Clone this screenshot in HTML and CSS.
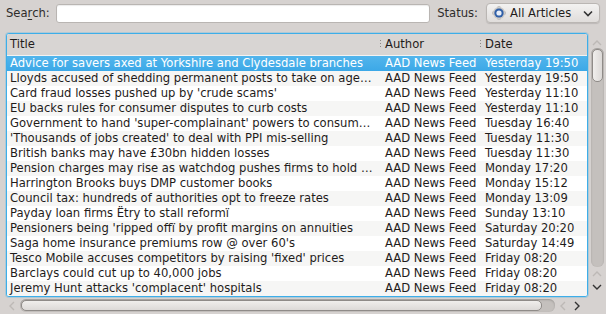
FILE: index.html
```html
<!DOCTYPE html>
<html>
<head>
<meta charset="utf-8">
<link rel="stylesheet" href="styles.css">
</head>
<body>
<div class="win">
  <div class="toolbar">
    <span class="lbl">Sea<u>r</u>ch:</span>
    <div class="search"></div>
    <span class="lbl status-lbl">Status:</span>
    <div class="combo">
      <svg class="gear" width="14" height="14" viewBox="0 0 14 14">
        <circle cx="7" cy="7" r="6" fill="#c9c7c5"/>
        <g fill="#d9d7d5" stroke="#aaa8a6" stroke-width="0.5">
          <rect x="6" y="0" width="2" height="3"/>
          <rect x="6" y="11" width="2" height="3"/>
          <rect x="0" y="6" width="3" height="2"/>
          <rect x="11" y="6" width="3" height="2"/>
        </g>
        <circle cx="7" cy="7" r="4.6" fill="#2f5fa8"/>
        <circle cx="7" cy="7" r="2.6" fill="#e8eef8"/>
      </svg>
      <span class="combo-text">All Articles</span>
      <svg class="chev" width="10" height="7" viewBox="0 0 10 7"><path d="M1 1.5 L5 5.5 L9 1.5" fill="none" stroke="#333" stroke-width="1.6"/></svg>
    </div>
  </div>
  <div class="main">
    <div class="list">
      <div class="head row">
        <div class="c title">Title</div>
        <div class="c author"><span class="grip"></span>Author</div>
        <div class="c date"><span class="grip"></span>Date</div>
      </div>
      <div class="body">
        <div class="row sel"><div class="c title">Advice for savers axed at Yorkshire and Clydesdale branches</div><div class="c author">AAD News Feed</div><div class="c date">Yesterday 19:50</div></div>
        <div class="row"><div class="c title">Lloyds accused of shedding permanent posts to take on age…</div><div class="c author">AAD News Feed</div><div class="c date">Yesterday 19:50</div></div>
        <div class="row"><div class="c title">Card fraud losses pushed up by 'crude scams'</div><div class="c author">AAD News Feed</div><div class="c date">Yesterday 11:10</div></div>
        <div class="row"><div class="c title">EU backs rules for consumer disputes to curb costs</div><div class="c author">AAD News Feed</div><div class="c date">Yesterday 11:10</div></div>
        <div class="row"><div class="c title">Government to hand 'super-complainant' powers to consum…</div><div class="c author">AAD News Feed</div><div class="c date">Tuesday 16:40</div></div>
        <div class="row"><div class="c title">'Thousands of jobs created' to deal with PPI mis-selling</div><div class="c author">AAD News Feed</div><div class="c date">Tuesday 11:30</div></div>
        <div class="row"><div class="c title">British banks may have £30bn hidden losses</div><div class="c author">AAD News Feed</div><div class="c date">Tuesday 11:30</div></div>
        <div class="row"><div class="c title">Pension charges may rise as watchdog pushes firms to hold …</div><div class="c author">AAD News Feed</div><div class="c date">Monday 17:20</div></div>
        <div class="row"><div class="c title">Harrington Brooks buys DMP customer books</div><div class="c author">AAD News Feed</div><div class="c date">Monday 15:12</div></div>
        <div class="row"><div class="c title">Council tax: hundreds of authorities opt to freeze rates</div><div class="c author">AAD News Feed</div><div class="c date">Monday 13:09</div></div>
        <div class="row"><div class="c title">Payday loan firms Ëtry to stall reformï</div><div class="c author">AAD News Feed</div><div class="c date">Sunday 13:10</div></div>
        <div class="row"><div class="c title">Pensioners being 'ripped offï by profit margins on annuities</div><div class="c author">AAD News Feed</div><div class="c date">Saturday 20:20</div></div>
        <div class="row"><div class="c title">Saga home insurance premiums row @ over 60's</div><div class="c author">AAD News Feed</div><div class="c date">Saturday 14:49</div></div>
        <div class="row"><div class="c title">Tesco Mobile accuses competitors by raising 'fixed' prices</div><div class="c author">AAD News Feed</div><div class="c date">Friday 08:20</div></div>
        <div class="row"><div class="c title">Barclays could cut up to 40,000 jobs</div><div class="c author">AAD News Feed</div><div class="c date">Friday 08:20</div></div>
        <div class="row"><div class="c title">Jeremy Hunt attacks 'complacent' hospitals</div><div class="c author">AAD News Feed</div><div class="c date">Friday 08:20</div></div>
      </div>
    </div>
    <div class="vscroll">
      <svg class="arr" width="12" height="8" viewBox="0 0 12 8"><path d="M2 6 L6 2 L10 6" fill="none" stroke="#bdb9b6" stroke-width="1.4"/></svg>
      <div class="vtrack"><div class="vthumb"></div></div>
      <svg class="arr arr-up2" width="12" height="8" viewBox="0 0 12 8"><path d="M2 6 L6 2 L10 6" fill="none" stroke="#bdb9b6" stroke-width="1.4"/></svg>
      <svg class="arr arr-dn" width="12" height="8" viewBox="0 0 12 8"><path d="M2 2 L6 6 L10 2" fill="none" stroke="#333" stroke-width="1.4"/></svg>
    </div>
    <div class="hscroll">
      <svg class="harr" width="8" height="12" viewBox="0 0 8 12"><path d="M6 2 L2 6 L6 10" fill="none" stroke="#bdb9b6" stroke-width="1.4"/></svg>
      <div class="htrack"><div class="hthumb"></div></div>
      <svg class="harr" width="8" height="12" viewBox="0 0 8 12"><path d="M6 2 L2 6 L6 10" fill="none" stroke="#bdb9b6" stroke-width="1.4"/></svg>
      <svg class="harr harr-r" width="8" height="12" viewBox="0 0 8 12"><path d="M2 2 L6 6 L2 10" fill="none" stroke="#333" stroke-width="1.4"/></svg>
    </div>
  </div>
</div>
</body>
</html>
```
FILE: styles.css
```css
html, body { margin: 0; padding: 0; }
body {
  background: #d6d2d0;
  font-family: "DejaVu Sans", sans-serif;
  font-size: 11.6px;
  color: #1f1c1b;
  width: 606px;
  height: 314px;
  overflow: hidden;
}
.toolbar {
  display: flex;
  align-items: center;
  height: 26px;
  padding: 0 6px 0 6px;
}
.lbl { color: #2e2c2b; }
.lbl u { text-decoration-thickness: 1px; text-underline-offset: 2px; }
.search {
  flex: 1;
  height: 17px;
  margin-left: 6px;
  background: #fff;
  border: 1px solid #b9b5b2;
  border-radius: 3px;
  box-shadow: inset 0 1px 1px rgba(0,0,0,0.08);
}
.status-lbl { margin-left: 7px; }
.combo {
  display: flex;
  align-items: center;
  height: 20px;
  margin-left: 8px;
  padding: 0 6px 0 5px;
  box-sizing: border-box;
  width: 114px;
  border: 1px solid #bab6b3;
  border-radius: 4px;
  background: linear-gradient(#f3f2f1, #e0dddb);
  box-shadow: 0 1px 1px rgba(0,0,0,0.12);
}
.gear { margin-right: 4px; }
.combo-text { flex: 1; color: #1f1c1b; }
.main {
  display: grid;
  grid-template-columns: 582px 16px;
  grid-template-rows: 264px 17px;
  padding: 7px 0 0 6px;
  column-gap: 1px;
}
.list {
  grid-column: 1;
  grid-row: 1;
  border: 1px solid #3daee9;
  border-radius: 3px;
  background: #fff;
  overflow: hidden;
  box-shadow: 0 0 0 1px rgba(61,174,233,0.25);
}
.row {
  display: flex;
  height: 15px;
  line-height: 15px;
  white-space: nowrap;
}
.row:nth-child(even) { background: #f6f6f5; }
.head {
  height: 21px;
  line-height: 21px;
  background: #d8d5d3;
  border-bottom: 1px solid #f4f3f2;
}
.c { overflow: hidden; box-sizing: border-box; }
.title { width: 373px; padding-left: 3px; }
.author { width: 100px; padding-left: 5px; }
.date { flex: 1; padding-left: 5px; }
.head .author, .head .date { position: relative; }
.grip {
  position: absolute;
  left: 0;
  top: 6px;
  width: 1px;
  height: 9px;
  background: repeating-linear-gradient(#8d8986 0 1px, transparent 1px 3px);
}
.sel {
  background: linear-gradient(#52b5ec, #3ca8e7) !important;
  color: #fff;
}
.vscroll {
  grid-column: 2;
  grid-row: 1;
  display: flex;
  flex-direction: column;
  align-items: center;
  padding: 6px 0 6px;
}
.arr { flex: none; }
.vtrack {
  flex: 1;
  width: 13px;
  margin: 1px 0 3px;
  border-radius: 6px;
  background: #c4c0bd;
  box-shadow: inset 0 1px 2px rgba(0,0,0,0.2);
  display: flex;
  flex-direction: column;
}
.vthumb {
  height: 31px;
  margin: 1px;
  border-radius: 5px;
  border: 1px solid #8f8b88;
  background: linear-gradient(90deg, #f0eeec, #dcd9d7);
}
.arr-dn { margin-top: 5px; }
.hscroll {
  grid-column: 1;
  grid-row: 2;
  display: flex;
  align-items: center;
  padding: 0 7px 0 2px;
}
.harr { flex: none; }
.htrack {
  flex: 1;
  height: 13px;
  margin: 0 4px 0 4px;
  border-radius: 6px;
  background: #c4c0bd;
  box-shadow: inset 0 1px 2px rgba(0,0,0,0.2);
  display: flex;
}
.hthumb {
  width: 519px;
  margin: 1px;
  border-radius: 5px;
  border: 1px solid #8f8b88;
  background: linear-gradient(#f0eeec, #dcd9d7);
}
.harr-r { margin-left: 6px; }
```
